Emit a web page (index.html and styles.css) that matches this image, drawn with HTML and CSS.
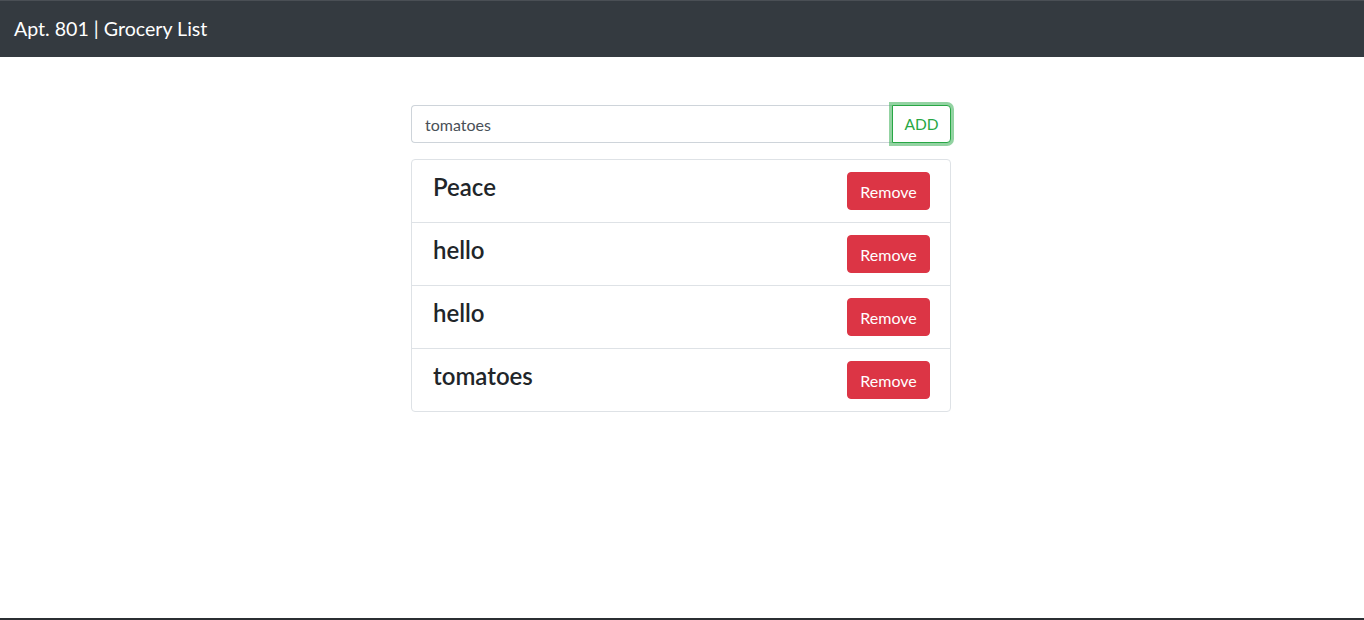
FILE: index.html
```html
<!DOCTYPE html>
<html lang="en">
<head>
<meta charset="utf-8">
<title>Grocery List</title>
<link rel="stylesheet" href="styles.css">
</head>
<body>
<div class="frame">
  <nav class="navbar">
    <span class="brand">Apt. 801 | Grocery List</span>
  </nav>
  <main class="content">
    <div class="column">
      <form class="add-form">
        <input class="add-input" type="text" value="tomatoes">
        <button class="add-btn" type="button">ADD</button>
      </form>
      <ul class="list">
        <li class="item"><h4 class="item-name">Peace</h4><button class="remove-btn" type="button">Remove</button></li>
        <li class="item"><h4 class="item-name">hello</h4><button class="remove-btn" type="button">Remove</button></li>
        <li class="item"><h4 class="item-name">hello</h4><button class="remove-btn" type="button">Remove</button></li>
        <li class="item"><h4 class="item-name">tomatoes</h4><button class="remove-btn" type="button">Remove</button></li>
      </ul>
    </div>
  </main>
</div>
</body>
</html>
```

FILE: styles.css
```css
* { box-sizing: border-box; }
html, body { margin: 0; padding: 0; }
body {
  font-family: Lato, "Noto Sans", "Liberation Sans", sans-serif;
  color: #212529;
  background: #fff;
  overflow: hidden;
}
.frame {
  height: 620px;
  display: flex;
  flex-direction: column;
  border-bottom: 2px solid #2b2f33;
}
.navbar {
  height: 57px;
  background: #343a40;
  border-top: 1px solid #4a4f55;
  display: flex;
  align-items: center;
  padding: 0 14px;
  flex: none;
}
.brand {
  color: #fff;
  font-size: 19.6px;
  line-height: 30px;
}
.content {
  flex: 1;
  display: flex;
  justify-content: center;
  padding-top: 48px;
  padding-right: 2px;
}
.column {
  width: 540px;
}
.add-form {
  display: flex;
  margin: 0 0 16px 0;
  height: 38px;
}
.add-input {
  flex: 1;
  min-width: 0;
  height: 38px;
  border: 1px solid #ced4da;
  border-right: none;
  border-radius: 4px 0 0 4px;
  padding: 6px 13px;
  font-family: inherit;
  font-size: 16px;
  color: #495057;
  outline: none;
}
.add-btn {
  width: 59px;
  height: 38px;
  border: 1px solid #28a745;
  border-radius: 0 4px 4px 0;
  background: #fff;
  color: #28a745;
  font-family: inherit;
  font-size: 15.5px;
  box-shadow: 0 0 0 3px rgba(40, 167, 69, 0.5);
  position: relative;
  z-index: 1;
  padding: 0;
}
.list {
  list-style: none;
  margin: 0;
  padding: 0;
  border: 1px solid #dee2e6;
  border-radius: 4px;
  width: 540px;
}
.item {
  display: flex;
  align-items: center;
  justify-content: space-between;
  padding: 12px 20px 12px 21px;
  height: 63px;
  border-top: 1px solid #dee2e6;
}
.item:first-child {
  border-top: none;
  height: 62px;
}
.item-name {
  margin: 0;
  font-size: 24px;
  font-weight: 600;
  line-height: 29px;
  align-self: flex-start;
  padding-top: 0;
}
.remove-btn {
  width: 83px;
  height: 38px;
  background: #dc3545;
  color: #fff;
  border: 1px solid #dc3545;
  border-radius: 4px;
  font-family: inherit;
  font-size: 16px;
  padding: 0;
}
```
